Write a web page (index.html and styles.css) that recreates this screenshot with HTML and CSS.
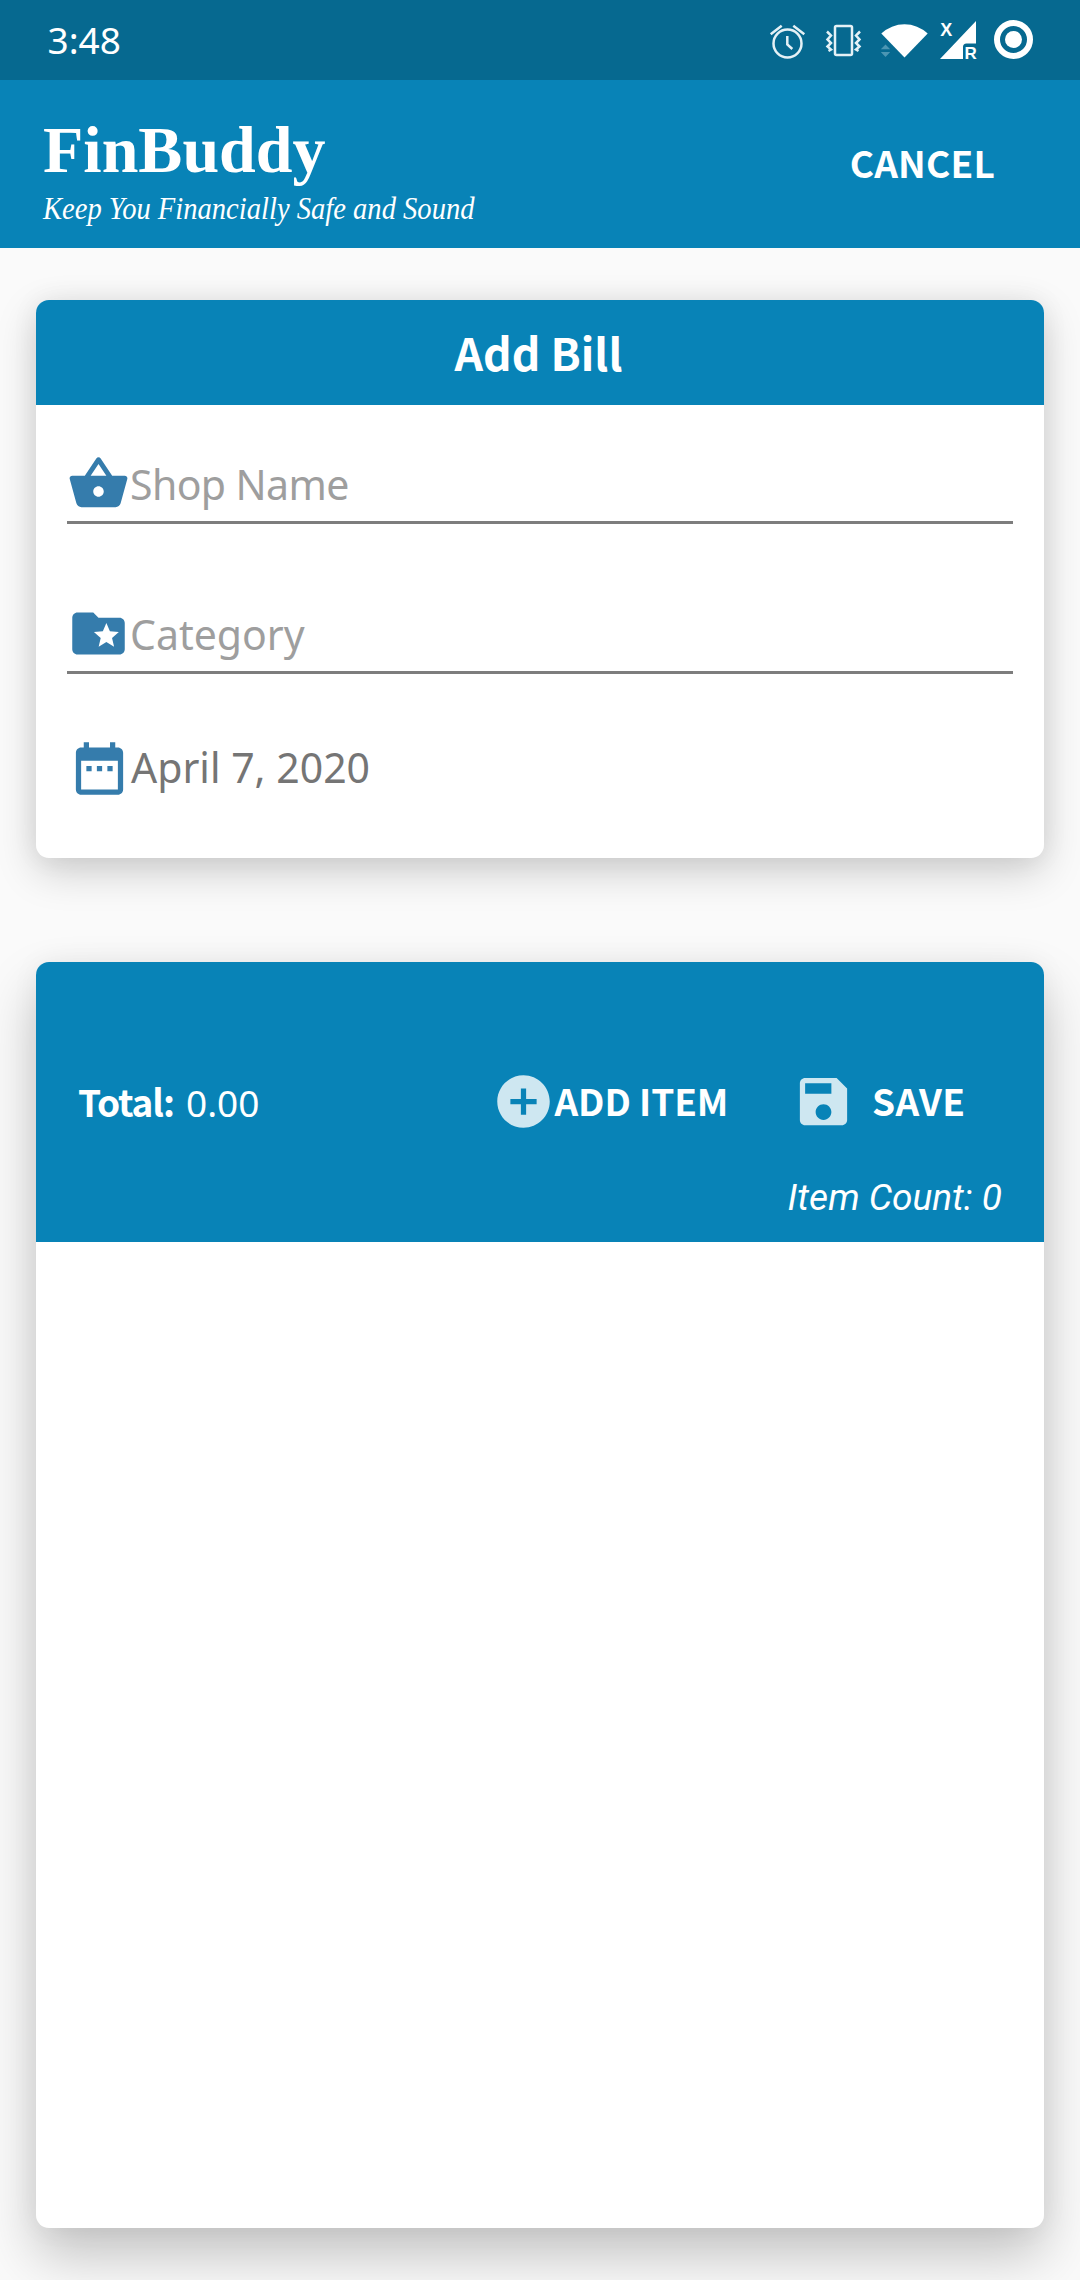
FILE: index.html
```html
<!DOCTYPE html>
<html lang="en">
<head>
<meta charset="utf-8">
<title>FinBuddy</title>
<link rel="stylesheet" href="styles.css">
</head>
<body>
<div class="status">
  <span class="clock">3:48</span>
  <svg class="status-icons" viewBox="760 0 280 80" width="280" height="80" fill="none" stroke="#e4f1f6" stroke-width="2.5">
    <circle cx="787.5" cy="43.500" r="14"/>
    <path d="M787.300 36v8.500l5 4.500M770.700 34.200l11-8.400M804.300 34.200l-11-8.400"/>
    <rect x="835" y="26" width="17" height="29" rx="1.500"/>
    <path d="M827 31.500l4 4-3.500 4 3.500 3.500-3.500 3.500 3.500 3-2.500 1.500M860 31.500l-4 4 3.500 4-3.500 3.500 3.500 3.500-3.500 3 2.500 1.500"/>
    <path d="M881.300 33.500a34 34 0 0 1 46.400 0L904.500 57.500z" fill="#fff" stroke="none"/>
    <path d="M885.500 44.500l4.700 4.700h-9.400zM885.500 57l4.700-4.900h-9.400z" fill="#4c96b3" stroke="none"/>
    <path d="M976 21v22.500h-9.500q-3.500 0-3.500 3.500v12h-23z" fill="#fff" stroke="none"/>
    <text class="signal-x" x="940.200" y="35.800">X</text>
    <text class="signal-r" x="964.500" y="58.700">R</text>
    <circle cx="1013.500" cy="39.500" r="16.500" stroke="#fff" stroke-width="6"/>
    <circle cx="1013.500" cy="39.500" r="8.500" fill="#fff" stroke="none"/>
  </svg>
</div>
<header class="appbar">
  <div>
    <div class="brand">FinBuddy</div>
    <div class="tagline">Keep You Financially Safe and Sound</div>
  </div>
  <span class="cancel">CANCEL</span>
</header>
<main class="content">
  <section class="card bill">
    <h1 class="card-title">Add Bill</h1>
    <div class="fields">
      <div class="field">
        <svg class="icon" viewBox="0 0 24 24"><path d="M17.210 9l-4.380-6.560c-.190-.280-.510-.420-.830-.420-.320 0-.640.140-.830.430L6.790 9H2c-.550 0-1 .450-1 1 0 .090.010.180.040.270l2.540 9.270c.230.840 1 1.460 1.920 1.460h13c.920 0 1.690-.620 1.930-1.460l2.540-9.270L23 10c0-.550-.450-1-1-1h-4.790zM9 9l3-4.400L15 9H9zm3 8c-1.100 0-2-.900-2-2s.900-2 2-2 2 .900 2 2-.900 2-2 2z"/></svg>
        <span class="hint shop">Shop Name</span>
      </div>
      <div class="field">
        <svg class="icon" viewBox="0 0 24 24"><path d="M20 6h-8l-2-2H4c-1.100 0-1.990.900-1.990 2L2 18c0 1.100.900 2 2 2h16c1.100 0 2-.900 2-2V8c0-1.100-.900-2-2-2zm-2.060 11L15 15.280 12.060 17l.780-3.330-2.590-2.240 3.410-.290L15 8l1.340 3.140 3.410.290-2.590 2.240.780 3.330z"/></svg>
        <span class="hint">Category</span>
      </div>
      <div class="date">
        <svg class="icon" viewBox="0 0 24 24"><path d="M9 11H7v2h2v-2zm4 0h-2v2h2v-2zm4 0h-2v2h2v-2zm2-7h-1V2h-2v2H8V2H6v2H5c-1.110 0-1.990.900-1.990 2L3 20c0 1.100.890 2 2 2h14c1.100 0 2-.900 2-2V6c0-1.100-.900-2-2-2zm0 16H5V9h14v11z"/></svg>
        <span>April 7, 2020</span>
      </div>
    </div>
  </section>
  <section class="card items">
    <div class="summary">
      <div class="actions">
        <span class="total">Total:</span>
        <span class="amount">0.00</span>
        <span class="action add"><svg class="icon" viewBox="0 0 24 24"><path d="M12 2C6.480 2 2 6.480 2 12s4.480 10 10 10 10-4.480 10-10S17.520 2 12 2zm5 11h-4v4h-2v-4H7v-2h4V7h2v4h4v2z"/></svg>ADD ITEM</span>
        <span class="action save"><svg class="icon" viewBox="0 0 24 24"><path d="M17 3H5c-1.110 0-2 .900-2 2v14c0 1.100.890 2 2 2h14c1.100 0 2-.900 2-2V7l-4-4zm-5 16c-1.660 0-3-1.340-3-3s1.340-3 3-3 3 1.340 3 3-1.340 3-3 3zm3-10H5V5h10v4z"/></svg>SAVE</span>
      </div>
      <div class="count">Item Count: 0</div>
    </div>
  </section>
</main>
</body>
</html>
```
FILE: styles.css
```css
* { box-sizing: border-box; }
body {
  margin: 0;
  width: 1080px;
  height: 2280px;
  overflow: hidden;
  background: #fafafa;
  font-family: "Noto Sans", sans-serif;
  white-space: nowrap;
  color: #fff;
}
.status {
  display: flex;
  justify-content: space-between;
  height: 80px;
  padding: 0 40px 0 47.5px;
  background: #066990;
}
.clock { font-size: 37px; line-height: 80px; }
.signal-x, .signal-r {
  font-family: "Liberation Sans", sans-serif;
  font-weight: 700;
  fill: #fff;
  stroke: none;
}
.signal-x { font-size: 18px; }
.signal-r { font-size: 17px; }
.appbar {
  display: flex;
  justify-content: space-between;
  height: 168px;
  padding: 0 85px 0 43px;
  background: #0883b7;
}
.brand {
  margin-top: 35px;
  font: 700 66px/70px "Liberation Serif", serif;
}
.tagline {
  margin-top: 3px;
  font: italic 400 32px/40px "Liberation Serif", serif;
  transform: scaleX(0.893);
  transform-origin: left;
}
.cancel, .card-title, .total, .action {
  font-family: "Noto Sans CJK SC", sans-serif;
  font-weight: 700;
}
.cancel { font-size: 37px; line-height: 164px; letter-spacing: 0.2px; }
.content {
  display: flex;
  flex-direction: column;
  gap: 104px;
  padding: 52px 36px;
}
.card {
  border-radius: 13px;
  background: #fff;
}
.bill {
  height: 558px;
  box-shadow: 0 14px 40px rgba(0, 0, 0, .18), 0 0 28px rgba(0, 0, 0, .06);
}
.items {
  height: 1266px;
  box-shadow: 0 28px 54px rgba(0, 0, 0, .22), 0 0 28px rgba(0, 0, 0, .05);
}
.card-title, .summary {
  border-radius: 13px 13px 0 0;
  background: #0883b7;
}
.card-title {
  height: 105px;
  margin: 0;
  padding-right: 3px;
  font-size: 44.5px;
  line-height: 103px;
  text-align: center;
}
.fields { padding: 47px 31px 0; }
.icon { flex: none; width: 63px; height: 63px; fill: #357cac; }
.field {
  display: flex;
  height: 72px;
  margin-bottom: 78px;
  border-bottom: 3px solid #7d7d7d;
}
.hint {
  font-size: 41px;
  line-height: 64px;
  color: #9e9e9e;
}
.shop { letter-spacing: -0.6px; }
.date {
  display: flex;
  margin-top: -15px;
  padding-left: 1px;
  font-size: 41px;
  line-height: 60px;
  color: #757575;
}
.summary { height: 280px; padding: 108px 42px 0; }
.actions {
  display: flex;
  height: 63px;
  font-size: 37px;
  line-height: 61px;
}
.total { width: 108px; line-height: 62px; letter-spacing: -1.1px; }
.amount { width: 305.5px; line-height: 65px; }
.action { display: flex; }
.action .icon { fill: #cee7f1; }
.add { width: 300.5px; letter-spacing: -0.1px; }
.save { gap: 17px; letter-spacing: 0.4px; }
.count {
  margin-top: 43px;
  font: italic 400 37px/44px Roboto, sans-serif;
  text-align: right;
}
```
